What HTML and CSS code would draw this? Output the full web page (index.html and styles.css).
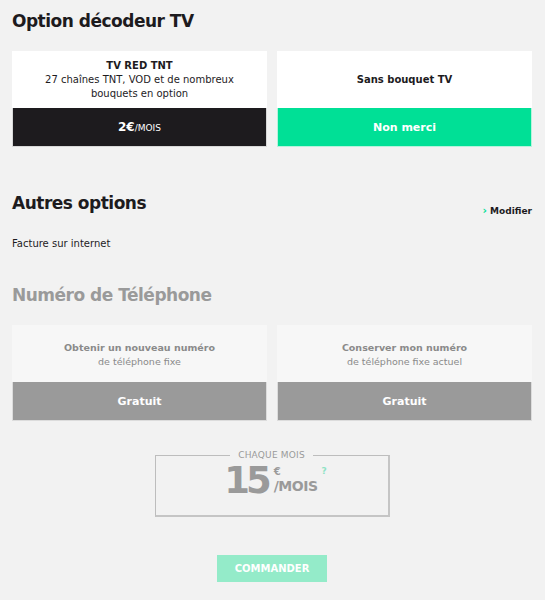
FILE: index.html
```html
<!DOCTYPE html>
<html lang="fr">
<head>
<meta charset="utf-8">
<link rel="stylesheet" href="styles.css">
</head>
<body>
<div class="page">
  <h2 class="title">Option décodeur TV</h2>
  <div class="cards">
    <div class="card">
      <div class="card-top">
        <div class="card-name">TV RED TNT</div>
        <div class="card-desc">27 chaînes TNT, VOD et de nombreux<br>bouquets en option</div>
      </div>
      <div class="card-bottom dark"><b>2€</b><span class="per">/MOIS</span></div>
    </div>
    <div class="card">
      <div class="card-top">
        <div class="card-name">Sans bouquet TV</div>
      </div>
      <div class="card-bottom green"><b>Non merci</b></div>
    </div>
  </div>

  <div class="section-head">
    <h2 class="title">Autres options</h2>
    <a class="modify"><span class="chev">›</span>Modifier</a>
  </div>
  <p class="facture">Facture sur internet</p>

  <h2 class="title muted">Numéro de Téléphone</h2>
  <div class="cards">
    <div class="card soft">
      <div class="card-top">
        <div class="card-desc strong">Obtenir un nouveau numéro</div>
        <div class="card-desc">de téléphone fixe</div>
      </div>
      <div class="card-bottom gray"><b>Gratuit</b></div>
    </div>
    <div class="card soft">
      <div class="card-top">
        <div class="card-desc strong">Conserver mon numéro</div>
        <div class="card-desc">de téléphone fixe actuel</div>
      </div>
      <div class="card-bottom gray"><b>Gratuit</b></div>
    </div>
  </div>

  <div class="price-wrap">
    <fieldset class="price">
      <legend>CHAQUE MOIS</legend>
      <div class="price-row">
        <span class="amount">15</span>
        <span class="unit"><span class="euro">€</span><span class="mois">/MOIS</span></span>
        <span class="help">?</span>
      </div>
    </fieldset>
  </div>

  <div class="order-wrap">
    <button class="order">COMMANDER</button>
  </div>
</div>
</body>
</html>
```

FILE: styles.css
```css
* { box-sizing: border-box; }
html, body { margin: 0; padding: 0; }
body {
  background: #f2f2f2;
  font-family: "DejaVu Sans", Verdana, sans-serif;
  color: #1d1b1e;
  width: 545px;
  height: 600px;
  overflow: hidden;
}
.page { padding: 8px 13px 0 12px; }
.title {
  margin: 0;
  font-size: 17px;
  font-weight: bold;
  line-height: 26px;
  letter-spacing: -0.5px;
}
.title.muted { color: #9a9a9a; }
.cards {
  display: grid;
  grid-template-columns: 255px 255px;
  column-gap: 10px;
  margin-top: 17px;
}
.card { display: flex; flex-direction: column; }
.card-top {
  background: #fff;
  height: 57px;
  display: flex;
  flex-direction: column;
  justify-content: center;
  align-items: center;
  text-align: center;
}
.card.soft .card-top { background: #f7f7f7; padding-top: 2px; }
.card-name { font-size: 10px; font-weight: bold; line-height: 14px; }
.card-desc { font-size: 10px; line-height: 14px; color: #1d1b1e; }
.card.soft .card-desc { color: #8a8a8a; font-size: 9.5px; }
.card.soft .card-desc.strong { font-weight: bold; color: #8a8a8a; }
.card-bottom {
  height: 39px;
  display: flex;
  align-items: center;
  justify-content: center;
  color: #fff;
  font-size: 11px;
  border: 1px solid #e2e2e2;
  border-top: none;
}
.card-bottom.dark { background: #1d1b1e; border-color: #d8d8d8; }
.card-bottom.green { background: #00e096; border-color: #b5f3dc; }
.card-bottom.gray { background: #9a9a9a; border-color: #dcdcdc; }
.card-bottom b { font-weight: bold; }
.card-bottom.dark b { font-size: 12px; }
.card-bottom .per { font-size: 9px; margin-top: 1px; }

.section-head {
  display: flex;
  justify-content: space-between;
  align-items: flex-start;
  margin-top: 43px;
}
.modify {
  font-size: 9px;
  font-weight: bold;
  color: #1d1b1e;
  margin-top: 14px;
  display: flex;
  align-items: center;
}
.chev { color: #00e096; font-size: 11px; margin-right: 3px; }
.facture {
  margin: 20px 0 0;
  font-size: 10px;
  line-height: 14px;
}
.facture + .title { margin-top: 31px; }

.price-wrap { display: flex; justify-content: center; margin-top: 29px; }
.price {
  width: 235px;
  height: 67px;
  margin: 0;
  padding: 0;
  border-style: solid;
  border-width: 1px 2px 2px 1px;
  border-color: #bdbdbd #c5c5c5 #c5c5c5 #bdbdbd;
}
.price legend {
  margin: 0 auto;
  padding: 0 8px;
  font-size: 9px;
  color: #9a9a9a;
  letter-spacing: 0.2px;
}
.price-row {
  display: flex;
  justify-content: center;
  align-items: flex-start;
  margin-top: 1px;
  padding-left: 8px;
}
.amount {
  font-size: 37px;
  font-weight: bold;
  line-height: 40px;
  color: #9a9a9a;
  letter-spacing: -4px;
}
.unit { display: flex; flex-direction: column; margin-left: 6px; margin-top: 6px; color: #9a9a9a; }
.euro { font-size: 10px; line-height: 10px; font-weight: bold; }
.mois { font-size: 14px; line-height: 18px; font-weight: bold; letter-spacing: -0.5px; }
.help { color: #8fe3c5; font-size: 9px; font-weight: bold; margin-left: 4px; margin-top: 5px; }

.order-wrap { display: flex; justify-content: center; margin-top: 38px; }
.order {
  width: 110px;
  height: 27px;
  border: none;
  background: #94ebc9;
  color: #fff;
  font-family: "DejaVu Sans", Verdana, sans-serif;
  font-size: 10px;
  font-weight: bold;
  letter-spacing: 0px;
  padding: 0;
}
```
